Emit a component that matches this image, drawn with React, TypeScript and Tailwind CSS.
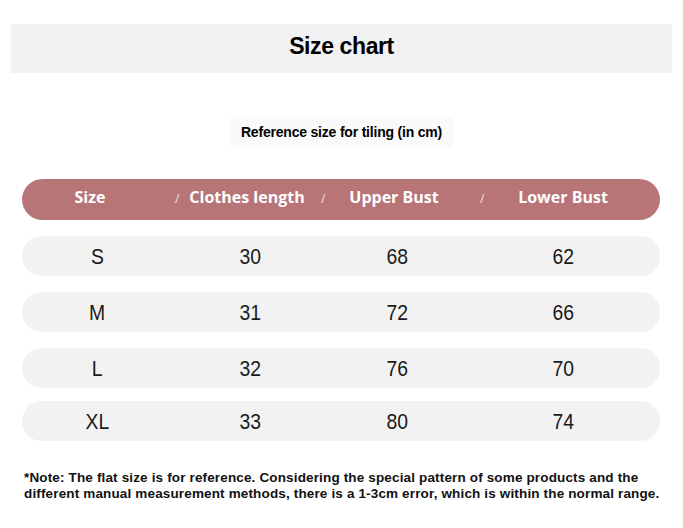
const rows = [
  { size: "S", length: "30", upper: "68", lower: "62", mt: "mt-[16px]" },
  { size: "M", length: "31", upper: "72", lower: "66", mt: "mt-[16px]" },
  { size: "L", length: "32", upper: "76", lower: "70", mt: "mt-[16px]" },
  { size: "XL", length: "33", upper: "80", lower: "74", mt: "mt-[13px]" },
];

export default function App() {
  return (
    <div className="w-[683px] h-[528px] bg-white overflow-hidden font-['Liberation_Sans',sans-serif] text-[#111]">
      <div className="pt-[24px] px-[11px]">
        <div className="h-[49px] bg-[#f2f2f2] flex items-center justify-center pb-[4px]">
          <h1 className="text-[23px] font-bold tracking-[-0.4px] text-black">Size chart</h1>
        </div>
      </div>

      <div className="mt-[44px] flex justify-center">
        <div className="h-[31px] w-[223px] bg-[#fafafa] flex items-center justify-center">
          <span className="text-[14px] font-bold tracking-[-0.2px] text-black">
            Reference size for tiling (in cm)
          </span>
        </div>
      </div>

      <div className="mt-[31px] mx-[22px] w-[638px]">
        <div className="relative h-[41px] rounded-full bg-[#b87577] grid grid-cols-[150px_156px_138px_194px] items-center pb-[5px] text-white font-['Open_Sans',sans-serif] font-bold text-[16px]">
          <span className="text-center pr-[14px]">Size</span>
          <span className="text-center pr-[6px]">Clothes length</span>
          <span className="text-center pr-[6px]">Upper Bust</span>
          <span className="text-center">Lower Bust</span>
          <span className="absolute left-[153px] top-[11px] text-[12px] font-normal text-white/80">/</span>
          <span className="absolute left-[299px] top-[11px] text-[12px] font-normal text-white/80">/</span>
          <span className="absolute left-[458px] top-[11px] text-[12px] font-normal text-white/80">/</span>
        </div>

        {rows.map((r) => (
          <div
            key={r.size}
            className={`${r.mt} h-[40px] rounded-full bg-[#f2f2f2] grid grid-cols-[150px_156px_138px_194px] items-center text-[22px] text-[#1a1a1a]`}
          >
            <span className="text-center"><span className="inline-block scale-x-[0.88]">{r.size}</span></span>
            <span className="text-center"><span className="inline-block scale-x-[0.88]">{r.length}</span></span>
            <span className="text-center"><span className="inline-block scale-x-[0.88]">{r.upper}</span></span>
            <span className="text-center"><span className="inline-block scale-x-[0.88]">{r.lower}</span></span>
          </div>
        ))}
      </div>

      <p className="mt-[29px] ml-[24px] w-[650px] text-[13.5px] leading-[16px] font-bold tracking-[0.15px] text-[#111] whitespace-nowrap">
        *Note: The flat size is for reference. Considering the special pattern of some products and the
        <br />
        different manual measurement methods, there is a 1-3cm error, which is within the normal range.
      </p>
    </div>
  );
}
